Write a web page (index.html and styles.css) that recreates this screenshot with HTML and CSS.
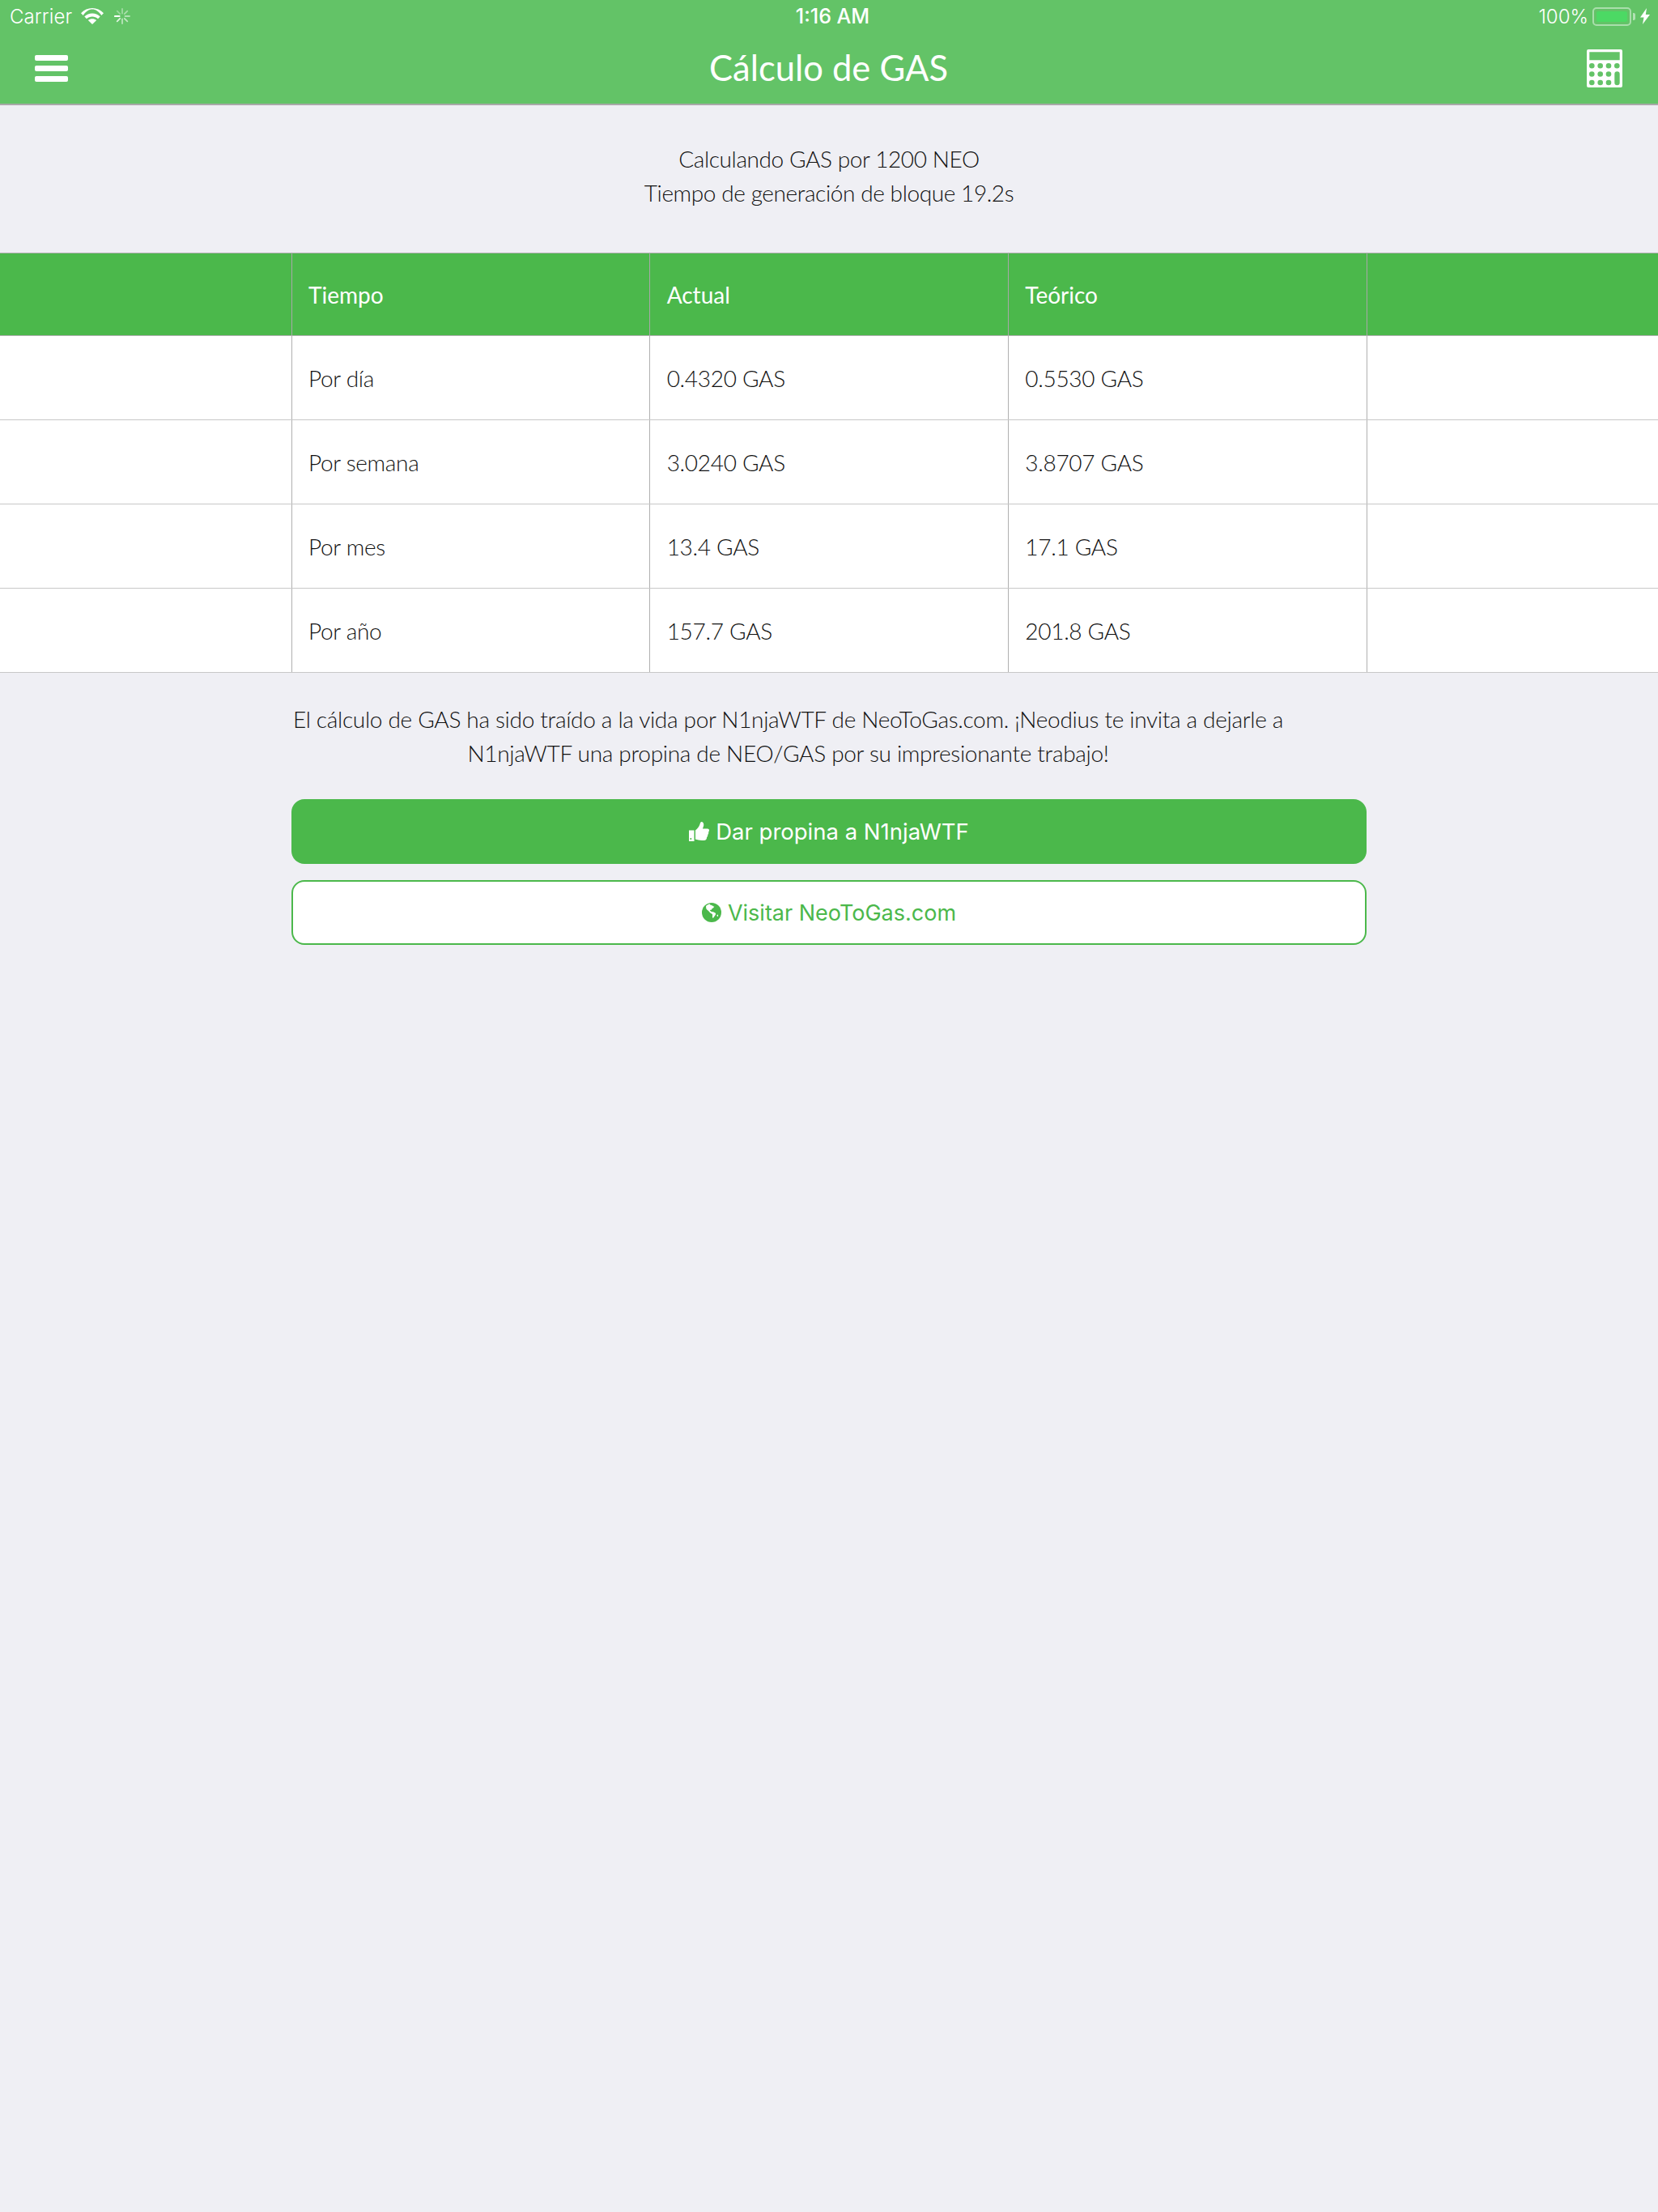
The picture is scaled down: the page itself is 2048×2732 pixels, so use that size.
FILE: index.html
```html
<!DOCTYPE html>
<html lang="es">
<head>
<meta charset="utf-8">
<title>Cálculo de GAS</title>
<link rel="stylesheet" href="styles.css">
</head>
<body>
<header class="appbar">
  <div class="status">
    <div class="status-left">
      <span class="carrier">Carrier</span>
      <svg class="wifi" viewBox="0 0 28 20" fill="#fff"><path d="M0 6.300C7.800-2.100 20.200-2.100 28 6.300L25.300 9.100C19-.9 9-.9 2.700 9.100z"/><path d="M4.300 10.500C9.800 5.300 18.200 5.300 23.700 10.500L21 13.300C17.100 9.700 10.900 9.700 7 13.300z"/><path d="M8.800 15C11.800 12.500 16.200 12.500 19.200 15L14 20z"/></svg>
      <svg class="spin" viewBox="0 0 20 20" stroke="#fff" stroke-width="1.800" stroke-linecap="round"><path d="M1 10h5.500" stroke-width="2.200"/><path d="M13.500 10H19" opacity=".5"/><path d="M10 1v5.500" opacity=".4"/><path d="M10 13.500V19" opacity=".55"/><path d="M3.700 3.700l3.500 3.500" opacity=".35"/><path d="M16.300 3.700l-3.500 3.500" opacity=".45"/><path d="M3.700 16.300l3.500-3.500" opacity=".8"/><path d="M16.300 16.300l-3.500-3.500" opacity=".6"/></svg>
    </div>
    <span class="clock">1:16 AM</span>
    <div class="status-right">
      <span class="pct">100%</span>
      <span class="battery"><span class="battery-fill"></span></span>
      <span class="battery-cap"></span>
      <svg class="bolt" viewBox="0 0 12 20"><path d="M8 0 0 11.500h4.500L3 20l9-12H6.800z" fill="#fff"/></svg>
    </div>
  </div>
  <nav class="navbar">
    <div class="burger"><span></span><span></span><span></span></div>
    <h1 class="title">Cálculo de GAS</h1>
    <svg class="calc" viewBox="0 0 44 47">
      <path fill-rule="evenodd" fill="#fff" d="M2 0h40a2 2 0 0 1 2 2v43a2 2 0 0 1-2 2H2a2 2 0 0 1-2-2V2a2 2 0 0 1 2-2zM3.300 3.300v10h37.400v-10z"/>
      <g fill="#63c367">
        <circle cx="6.300" cy="20.300" r="3.300"/><circle cx="16.700" cy="20.300" r="3.300"/><circle cx="27" cy="20.300" r="3.300"/><circle cx="37.300" cy="20.300" r="3.300"/>
        <circle cx="6.300" cy="30.500" r="3.300"/><circle cx="16.700" cy="30.500" r="3.300"/><circle cx="27" cy="30.500" r="3.300"/>
        <circle cx="6.300" cy="41" r="3.300"/><circle cx="16.700" cy="41" r="3.300"/><circle cx="27" cy="41" r="3.300"/>
        <rect x="34.300" y="27.300" width="6.400" height="17" rx="3.200"/>
      </g>
    </svg>
  </nav>
</header>
<main>
  <p class="intro">Calculando GAS por 1200 NEO<br>Tiempo de generación de bloque 19.2s</p>
  <table class="gas">
    <thead>
      <tr><th class="pad"></th><th>Tiempo</th><th>Actual</th><th>Teórico</th><th class="pad"></th></tr>
    </thead>
    <tbody>
      <tr><td class="pad"></td><td>Por día</td><td>0.4320 GAS</td><td>0.5530 GAS</td><td class="pad"></td></tr>
      <tr><td class="pad"></td><td>Por semana</td><td>3.0240 GAS</td><td>3.8707 GAS</td><td class="pad"></td></tr>
      <tr><td class="pad"></td><td>Por mes</td><td>13.4 GAS</td><td>17.1 GAS</td><td class="pad"></td></tr>
      <tr><td class="pad"></td><td>Por año</td><td>157.7 GAS</td><td>201.8 GAS</td><td class="pad"></td></tr>
    </tbody>
  </table>
  <section class="credits">
    <p class="credit-text">El cálculo de GAS ha sido traído a la vida por N1njaWTF de NeoToGas.com. ¡Neodius te invita a dejarle a N1njaWTF una propina de NEO/GAS por su impresionante trabajo!</p>
    <button class="btn btn-solid">
      <svg class="btn-icon" viewBox="0 0 25 25"><path fill="#fff" fill-rule="evenodd" d="M0 10.500h6.500V24H0zM2.300 20a1 1 0 1 0 0 2 1 1 0 0 0 0-2z"/><path fill="#fff" d="M8 10.500c2.300-1.500 4.500-4.500 5.500-7.500.4-1.500.6-2.700 2-3 2.300.2 3 2.500 2.700 4.500-.2 1.500-.8 2.700-1.300 4h6c1.300 0 2.100.9 2.100 2.100 0 .9-.4 1.700-.9 2.200.4 1.300 0 2.400-.9 3.200.2 1.300-.2 2.300-1.100 3 .1 2.500-1.300 4-3.600 4h-2.500c-3 0-5.500-.9-8-1.500z"/></svg>
      Dar propina a N1njaWTF
    </button>
    <button class="btn btn-outline">
      <svg class="btn-icon globe" viewBox="0 0 24 24"><circle cx="12" cy="12" r="12" fill="#4bb84b"/><path fill="#fff" d="M10 1.500c-2 .3-4 1.300-5 2.500.3 1.500 0 2.500.5 3.500.8 1.500 2.500 2 3.500 3.500.7 1 1.800 2 3 2.500 1 .5 1.500 1.500 1 2.500-.3 1 0 2 .6 3 .9-.3 1.300-1.500 2-2.500.8-1 1.500-2 1.500-3s-1.300-1.300-2.500-2c-1-.5-2-.8-3-.5-.5-1-1.500-1-1.800-1.800.7-.7 1.500-.2 2.200-.7 0-.8.500-1.300 1.500-1.700 1-.5 1.300-1.200 1.800-2-.8-.3-1.500-.2-1.800-1-.8-.3-1.500-.8-3.500-1.300z"/><path fill="#fff" d="M19 14.500c.8.300 1.300 1 1 2-.4.600-1 .6-1.300 0-.2-.8-.2-1.300.3-2z"/></svg>
      Visitar NeoToGas.com
    </button>
  </section>
</main>
</body>
</html>
```
FILE: styles.css
```css
* { box-sizing: border-box; }
html, body { margin: 0; padding: 0; }
body {
  min-height: 2732px;
  background: #efeff4;
  font-family: "Lato", "Liberation Sans", sans-serif;
  font-weight: 300;
  color: #111;
}
.appbar {
  height: 130px;
  background: #63c367;
  border-bottom: 2px solid #a8a8a8;
  color: #fff;
}
.status {
  height: 40px;
  padding: 0 10px 0 12px;
  display: grid;
  grid-template-columns: 1fr auto 1fr;
  align-items: center;
  font-family: "Inter", "Roboto", sans-serif;
  font-size: 24px;
  font-weight: 400;
}
.status-left { display: flex; align-items: center; }
.carrier { font-weight: 300; letter-spacing: 0.1px; }
.wifi { width: 28px; height: 20px; margin-left: 11px; }
.spin { width: 20px; height: 20px; margin-left: 13px; }
.clock { font-size: 25px; font-weight: 500; margin-left: 7px; }
.status-right { display: flex; align-items: center; justify-content: flex-end; }
.pct { font-weight: 300; }
.battery {
  width: 48px; height: 23px; margin-left: 5px; padding: 3px;
  border: 2px solid rgba(255,255,255,.45);
  border-radius: 5px;
  display: flex;
}
.battery-fill { flex: 1; background: #4cd964; border-radius: 2px; }
.battery-cap { width: 3px; height: 9px; margin-left: 2px; background: rgba(255,255,255,.5); border-radius: 0 2px 2px 0; }
.bolt { width: 12px; height: 20px; margin-left: 6px; }
.navbar {
  height: 88px;
  padding: 0 44px 0 43px;
  display: grid;
  grid-template-columns: 1fr auto 1fr;
  align-items: center;
}
.burger { width: 41px; display: flex; flex-direction: column; gap: 6px; }
.burger span { height: 7px; background: #fff; border-radius: 2px; }
.title {
  margin: 0;
  font-size: 43.500px;
  font-weight: 400;
  line-height: 1;
}
.calc { width: 44px; height: 47px; justify-self: end; }
.intro {
  margin: 0;
  padding: 45px 0 53px;
  text-align: center;
  font-size: 28px;
  letter-spacing: -0.4px;
  line-height: 42px;
}
.gas {
  width: 100%;
  border-collapse: collapse;
  table-layout: fixed;
  background: #fff;
  font-size: 28px;
  letter-spacing: -0.3px;
}
.gas th, .gas td {
  height: 104px;
  padding: 0 20.500px;
  text-align: left;
  border: 1px solid #c8c8c8;
}
.gas th {
  height: 102px;
  background: #4bb84b;
  color: #fff;
  font-weight: 400;
  letter-spacing: 0;
  border-top-color: #b0b0b0;
  border-bottom-color: #b0b0b0;
  border-left-color: #a8a8a8;
  border-right-color: #a8a8a8;
}
.gas td { border-left-color: #b0b0b0; border-right-color: #b0b0b0; }
.gas .pad { width: 360px; border-left: 0; }
.gas tr > :last-child { border-right: 0; }
.credits {
  width: 1328px;
  margin: 0 auto;
  display: flex;
  flex-direction: column;
  gap: 20px;
  padding-top: 36px;
}
.credit-text {
  margin: 0 0 16px;
  padding-right: 101px;
  text-align: center;
  font-size: 28px;
  letter-spacing: -0.3px;
  line-height: 42px;
}
.btn {
  height: 80px;
  border-radius: 16px;
  font-family: "Inter", "Roboto", sans-serif;
  font-size: 27.500px;
  font-weight: 400;
  display: flex;
  align-items: center;
  justify-content: center;
  gap: 8px;
  padding: 0;
}
.btn-solid { background: #4bb84b; color: #fff; border: 0; }
.btn-outline { background: #fff; color: #4bb84b; border: 2px solid #4bb84b; font-size: 27px; }
.btn-icon { width: 25px; height: 25px; }
.globe { width: 24px; height: 24px; }
```
